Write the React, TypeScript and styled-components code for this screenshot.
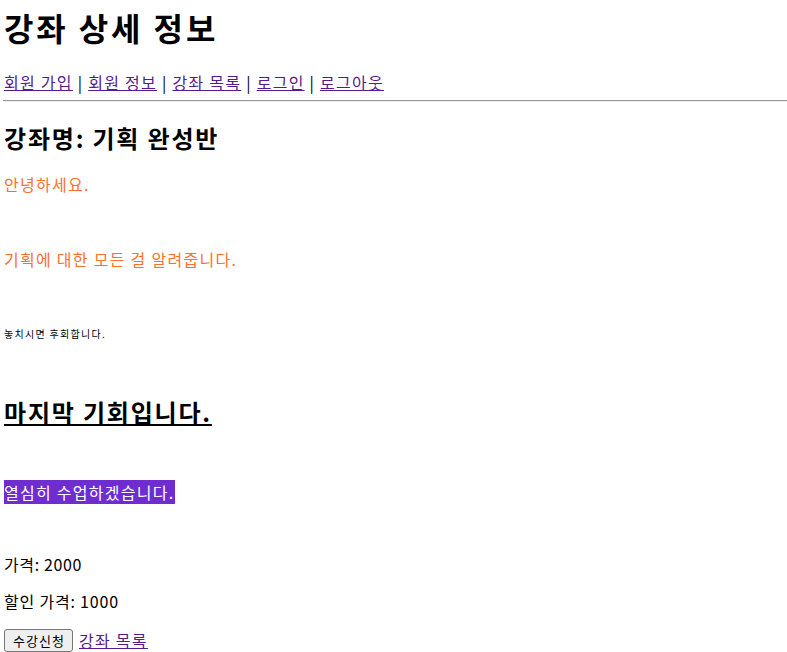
import React from "react";
import styled, { createGlobalStyle } from "styled-components";

const Global = createGlobalStyle`
  html, body { background: #ffffff; }
  body {
    margin: 8px 0 0 3px;
    font-family: "Noto Sans CJK KR", "Noto Sans", sans-serif;
    font-size: 16px;
    line-height: 21px;
    letter-spacing: 0.08em;
    color: #000000;
  }
`;

const Page = styled.div`
  display: flex;
  flex-direction: column;
  align-items: flex-start;
`;

const Title = styled.h1`
  font-size: 32px;
  font-weight: 700;
  line-height: 43px;
  letter-spacing: 0.09em;
  margin: -2px 0 23px 1px;
`;

const Nav = styled.div`
  line-height: 21px;
  margin-left: 1px;
  color: #000;
`;

const Link = styled.a`
  color: #551a8b;
  text-decoration: underline;
  cursor: pointer;
`;

const Rule = styled.hr`
  align-self: stretch;
  margin: 7px 0 0;
  border: none;
  border-top: 1px solid #9a9a9a;
  border-bottom: 1px solid #eeeeee;
  height: 0;
`;

const SubTitle = styled.h2<{ $underline?: boolean }>`
  font-size: 24px;
  font-weight: 700;
  line-height: 32px;
  margin: ${(p) => (p.$underline ? "0 0 0 1px" : "20px 0 0 1px")};
  letter-spacing: 0.075em;
  text-decoration: ${(p) => (p.$underline ? "underline" : "none")};
  text-decoration-thickness: 2px;
  text-underline-offset: 2px;
`;

const Text = styled.p<{ $color?: string; $size?: number; $top: number; $spacing?: number }>`
  margin: ${(p) => p.$top}px 0 0 1px;
  color: ${(p) => p.$color ?? "#000"};
  font-size: ${(p) => p.$size ?? 16}px;
  line-height: ${(p) => ((p.$size ?? 16) * 21) / 16}px;
  letter-spacing: ${(p) => p.$spacing ?? 0.08}em;
`;

const Spacer = styled.div<{ $h: number }>`
  height: ${(p) => p.$h}px;
`;

const Highlight = styled.span`
  background: #6f2dd0;
  color: #ffffff;
`;

const Row = styled.div`
  margin-top: 17px;
  margin-left: 1px;
  display: flex;
  align-items: center;
  gap: 6px;
`;

const Button = styled.button`
  font-family: "Noto Sans CJK KR", sans-serif;
  font-size: 13px;
  line-height: 17px;
  letter-spacing: 0.08em;
  padding: 2px 7px 2px 8px;
  background: #efefef;
  border: 1px solid #767676;
  border-radius: 3px;
  color: #000;
`;

export default function App() {
  return (
    <>
      <Global />
      <Page>
        <Title>강좌 상세 정보</Title>
        <Nav>
          <Link>회원 가입</Link> | <Link>회원 정보</Link> | <Link>강좌 목록</Link> |{" "}
          <Link>로그인</Link> | <Link>로그아웃</Link>
        </Nav>
        <Rule />
        <SubTitle>강좌명: 기획 완성반</SubTitle>
        <Text $color="#ff6f2c" $top={20}>안녕하세요.</Text>
        <Text $color="#ff6f2c" $top={54}>기획에 대한 모든 걸 알려줍니다.</Text>
        <Text $size={10} $top={57} $spacing={0.13}>놓치시면 후회합니다.</Text>
        <Spacer $h={56} />
        <SubTitle as="h2" $underline>마지막 기회입니다.</SubTitle>
        <Text $top={54}>
          <Highlight>열심히 수업하겠습니다.</Highlight>
        </Text>
        <Text $top={51} $spacing={0.04}>가격: 2000</Text>
        <Text $top={16} $spacing={0.05}>할인 가격: 1000</Text>
        <Row>
          <Button>수강신청</Button>
          <Link>강좌 목록</Link>
        </Row>
      </Page>
    </>
  );
}
